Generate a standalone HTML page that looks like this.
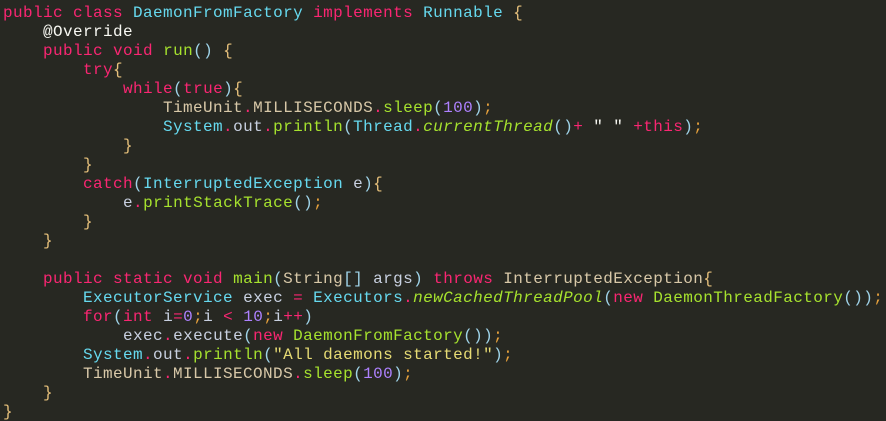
<!DOCTYPE html>
<html><head><meta charset="utf-8"><style>
html,body{margin:0;padding:0;background:#272822;width:886px;height:421px;overflow:hidden}
pre{margin:0;padding:4px 0 0 3px;font-family:"Liberation Mono",monospace;font-size:16px;letter-spacing:0.4px;line-height:19px;color:#f8f8f2}
.k{color:#f92672}.t{color:#66d9ef}.f{color:#a6e22e}.i{color:#a6e22e;font-style:italic}
.n{color:#ae81ff}.p{color:#9fd3e8}.b{color:#e6c07b}.s{color:#e6db74}.c{color:#d8c8a8}.v{color:#c8d0e0}.d{color:#f92672}.g{color:#f8f8f2}.sc{color:#e5a03c}
</style></head><body><pre><span class="k">public class</span> <span class="t">DaemonFromFactory</span> <span class="k">implements</span> <span class="t">Runnable</span> <span class="b">{</span>
    <span class="g">@Override</span>
    <span class="k">public void</span> <span class="f">run</span><span class="p">()</span> <span class="b">{</span>
        <span class="k">try</span><span class="b">{</span>
            <span class="k">while</span><span class="p">(</span><span class="k">true</span><span class="p">)</span><span class="b">{</span>
                <span class="c">TimeUnit</span><span class="d">.</span><span class="c">MILLISECONDS</span><span class="d">.</span><span class="f">sleep</span><span class="p">(</span><span class="n">100</span><span class="p">)</span><span class="sc">;</span>
                <span class="t">System</span><span class="d">.</span><span class="v">out</span><span class="d">.</span><span class="f">println</span><span class="p">(</span><span class="t">Thread</span><span class="d">.</span><span class="i">currentThread</span><span class="p">()</span><span class="k">+</span> <span class="g">" "</span> <span class="k">+this</span><span class="p">)</span><span class="sc">;</span>
            <span class="b">}</span>
        <span class="b">}</span>
        <span class="k">catch</span><span class="p">(</span><span class="t">InterruptedException</span> <span class="v">e</span><span class="p">)</span><span class="b">{</span>
            <span class="v">e</span><span class="d">.</span><span class="f">printStackTrace</span><span class="p">()</span><span class="sc">;</span>
        <span class="b">}</span>
    <span class="b">}</span>

    <span class="k">public static void</span> <span class="f">main</span><span class="p">(</span><span class="c">String</span><span class="p">[]</span> <span class="v">args</span><span class="p">)</span> <span class="k">throws</span> <span class="c">InterruptedException</span><span class="b">{</span>
        <span class="t">ExecutorService</span> <span class="v">exec</span> <span class="k">=</span> <span class="t">Executors</span><span class="d">.</span><span class="i">newCachedThreadPool</span><span class="p">(</span><span class="k">new</span> <span class="f">DaemonThreadFactory</span><span class="p">())</span><span class="sc">;</span>
        <span class="k">for</span><span class="p">(</span><span class="k">int</span> <span class="v">i</span><span class="k">=</span><span class="n">0</span><span class="sc">;</span><span class="v">i</span> <span class="k">&lt;</span> <span class="n">10</span><span class="sc">;</span><span class="v">i</span><span class="k">++</span><span class="p">)</span>
            <span class="v">exec</span><span class="d">.</span><span class="v">execute</span><span class="p">(</span><span class="k">new</span> <span class="f">DaemonFromFactory</span><span class="p">())</span><span class="sc">;</span>
        <span class="t">System</span><span class="d">.</span><span class="v">out</span><span class="d">.</span><span class="f">println</span><span class="p">(</span><span class="s">"All daemons started!"</span><span class="p">)</span><span class="sc">;</span>
        <span class="c">TimeUnit</span><span class="d">.</span><span class="c">MILLISECONDS</span><span class="d">.</span><span class="f">sleep</span><span class="p">(</span><span class="n">100</span><span class="p">)</span><span class="sc">;</span>
    <span class="b">}</span>
<span class="b">}</span></pre></body></html>
